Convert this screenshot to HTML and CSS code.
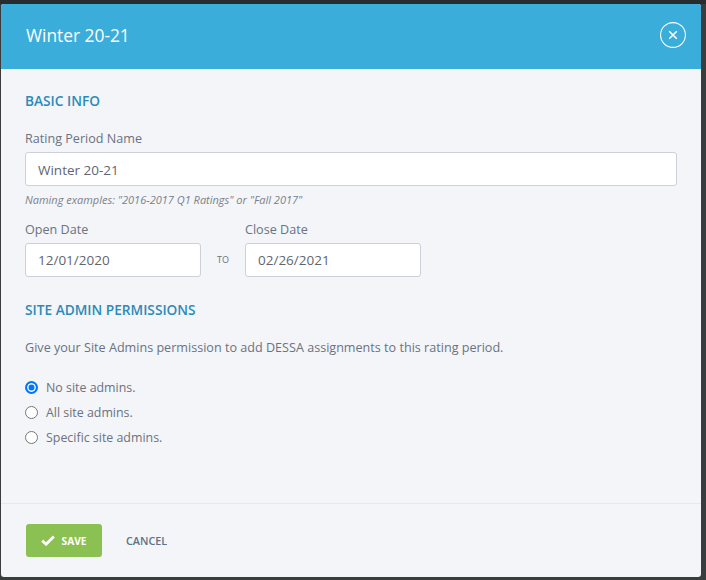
FILE: index.html
```html
<!DOCTYPE html>
<html lang="en">
<head>
<meta charset="utf-8">
<title>Winter 20-21</title>
<link rel="stylesheet" href="styles.css">
</head>
<body>
<div class="modal">
  <header class="modal-header">
    <h1 class="modal-title">Winter 20-21</h1>
    <button class="close" type="button" aria-label="Close">
      <svg width="26" height="26" viewBox="0 0 26 26"><circle cx="13" cy="13" r="12.4" fill="none" stroke="#fff" stroke-width="1.1"/><path d="M9.2 9.2l7.6 7.6M16.8 9.2l-7.6 7.6" fill="none" stroke="#fff" stroke-width="1.5"/></svg>
    </button>
  </header>
  <main class="modal-body">
    <h2 class="section-title">BASIC INFO</h2>
    <label class="label name-label">Rating Period Name</label>
    <div class="input full">Winter 20-21</div>
    <p class="hint">Naming examples: "2016-2017 Q1 Ratings" or "Fall 2017"</p>
    <div class="dates">
      <div class="date-field">
        <label class="label">Open Date</label>
        <div class="input date">12/01/2020</div>
      </div>
      <span class="to">TO</span>
      <div class="date-field">
        <label class="label">Close Date</label>
        <div class="input date">02/26/2021</div>
      </div>
    </div>
    <h2 class="section-title perms">SITE ADMIN PERMISSIONS</h2>
    <p class="desc">Give your Site Admins permission to add DESSA assignments to this rating period.</p>
    <div class="radios">
      <label class="radio"><span class="dot checked"></span>No site admins.</label>
      <label class="radio"><span class="dot"></span>All site admins.</label>
      <label class="radio"><span class="dot"></span>Specific site admins.</label>
    </div>
  </main>
  <footer class="modal-footer">
    <button class="save" type="button">
      <svg width="14" height="11" viewBox="0 0 14 11"><path d="M1.2 5.6l3.9 3.6L12.8 1.4" fill="none" stroke="#fff" stroke-width="2.8"/></svg>
      SAVE
    </button>
    <button class="cancel" type="button">CANCEL</button>
  </footer>
</div>
</body>
</html>
```
FILE: styles.css
```css
* { box-sizing: border-box; }
html, body { height: 100%; }
body {
  margin: 0;
  padding: 4px 5px 3px 1px;
  background: linear-gradient(#282c2f 4px, #3a3d3e 4px);
  font-family: "Open Sans", sans-serif;
  color: #6b7280;
  overflow: hidden;
}
.modal {
  height: 573px;
  background: #f3f5f9;
  border-radius: 3px;
  display: flex;
  flex-direction: column;
  overflow: hidden;
}
.modal-header {
  height: 65px;
  flex: none;
  background: #3baddb;
  display: flex;
  align-items: center;
  justify-content: space-between;
  padding: 0 15px 3px 25px;
}
.modal-title {
  margin: 0;
  font-size: 17.35px;
  font-weight: 400;
  color: #fff;
}
.close {
  background: none;
  border: 0;
  padding: 0;
  width: 26px;
  height: 26px;
  display: flex;
}
.modal-body {
  flex: 1;
  padding: 22px 24px 0;
}
.section-title {
  margin: 0;
  font-size: 13.7px;
  line-height: 19px;
  font-weight: 600;
  color: #2b8bb8;
}
.label {
  display: block;
  font-size: 12.6px;
  line-height: 18px;
  color: #6b7280;
}
.name-label { margin-top: 20px; margin-bottom: 4px; }
.input {
  height: 34px;
  background: #fff;
  border: 1px solid #ccd0da;
  border-radius: 3px;
  font-size: 13.5px;
  line-height: 34px;
  padding-left: 12px;
  color: #5f6670;
}
.full { width: 652px; }
.hint {
  margin: 5px 0 0;
  font-size: 11px;
  line-height: 18px;
  font-style: italic;
  color: #7b818a;
}
.dates {
  display: flex;
  align-items: flex-end;
  margin-top: 12px;
}
.date-field .label { margin-bottom: 4px; }
.date { width: 176px; line-height: 32px; }
.to {
  width: 44px;
  height: 34px;
  line-height: 34px;
  text-align: center;
  font-size: 9px;
  color: #6b7280;
}
.perms { margin-top: 23px; }
.desc {
  margin: 20px 0 0;
  font-size: 12.6px;
  line-height: 18px;
  color: #6b7280;
}
.radios {
  margin-top: 22px;
  display: flex;
  flex-direction: column;
  gap: 7px;
}
.radio {
  display: flex;
  align-items: center;
  height: 18px;
  font-size: 12.4px;
  line-height: 18px;
  color: #6b7280;
}
.dot {
  width: 13px;
  height: 13px;
  border-radius: 50%;
  border: 1px solid #767676;
  background: #fff;
  margin-right: 8px;
  margin-bottom: 2px;
  flex: none;
}
.dot.checked {
  border: 2px solid #0075ff;
  background: #0075ff;
  box-shadow: inset 0 0 0 1.5px #fff;
}
.modal-footer {
  height: 74px;
  flex: none;
  border-top: 1px solid #e6e8ec;
  display: flex;
  align-items: center;
  padding: 0 25px 0;
}
.save {
  width: 76px;
  height: 33px;
  background: #8bc152;
  border: 0;
  border-radius: 3px;
  color: #fff;
  font-family: inherit;
  font-size: 10.2px;
  font-weight: 700;
  display: flex;
  align-items: center;
  justify-content: center;
  gap: 7px;
  padding: 0 1px 0 0;
}
.cancel {
  background: none;
  border: 0;
  padding: 0;
  margin-left: 24px;
  font-family: inherit;
  font-size: 10.8px;
  font-weight: 600;
  color: #5e7186;
}
```
